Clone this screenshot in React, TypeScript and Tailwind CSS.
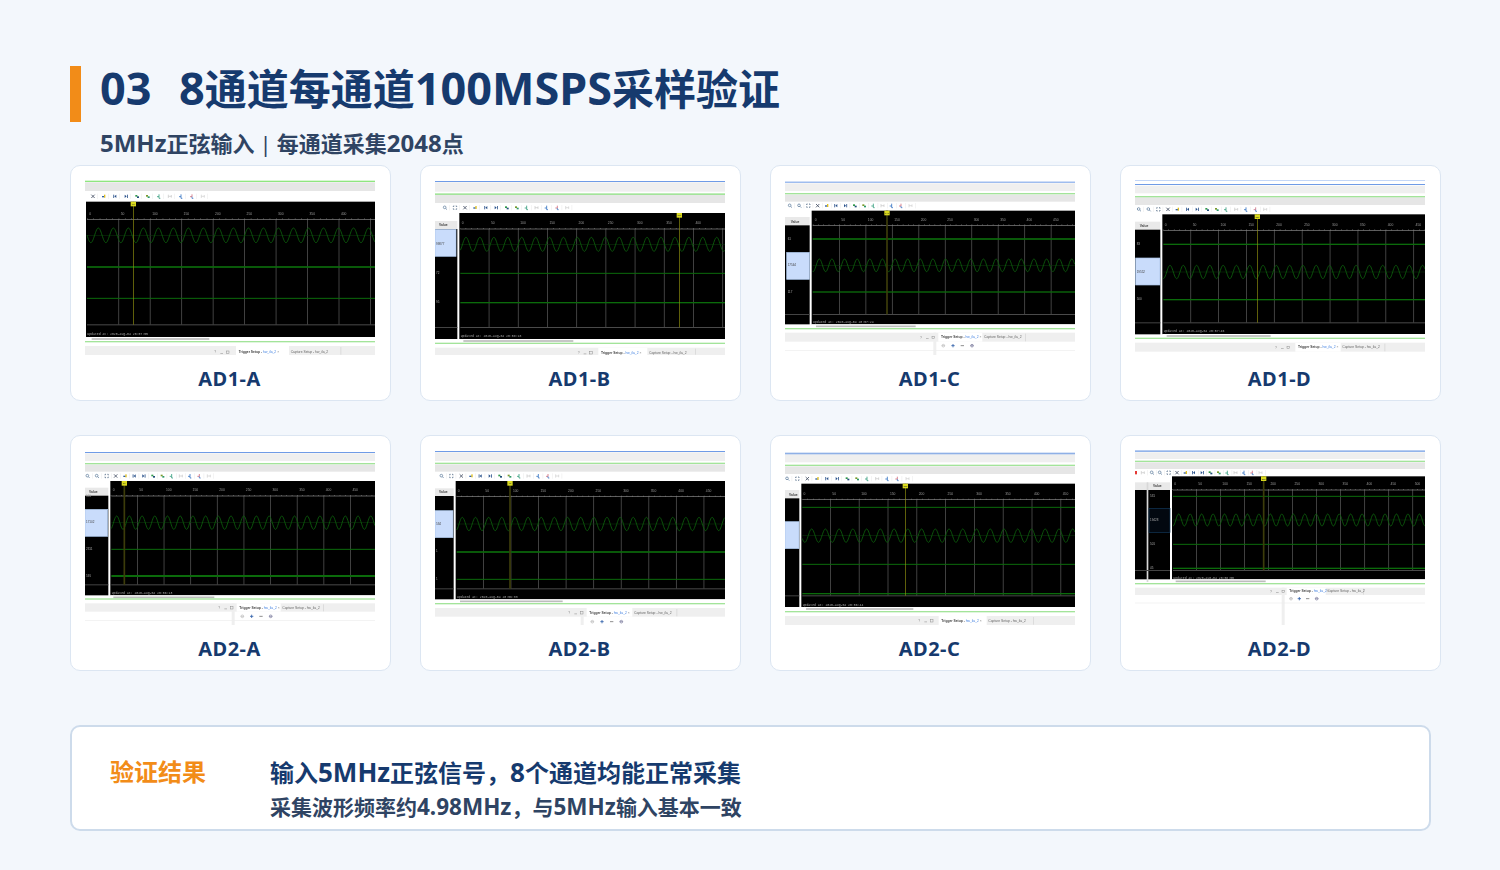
type Shot = {
  name: string;
  tops: [number, string, number?][];
  bands: [number, number][];
  toolbarY: number;
  icons: number[];
  redIcon?: boolean;
  plotX: number;
  plotTop: number;
  plotBottom: number;
  header?: [number, number];
  selected?: [number, number, number];
  darkSelected?: boolean;
  doublePanel?: boolean;
  values?: [number, string][];
  gridStart: number;
  gridStep: number;
  rulerY: number;
  floorY: number;
  marker: number;
  markerDim?: boolean;
  markerLabel: string;
  waveY: number;
  waveAmp: number;
  wavePeak: number;
  flats: [number, number][];
  updatedY: number;
  stamp: string;
  scroll: [number, number, number];
  greenY: number;
  band2: [number, number];
  tab: [number, number];
  tabY: number;
  helpX: number;
  lower?: [number, number[]];
  lowerLine?: number;
  divider?: number;
};

const BLUE = "#6f9be6";
const GREEN = "#a3e49a";
const UI_FONT = "Liberation Sans, sans-serif";

const shots: Shot[] = [
  {
    name: "AD1-A",
    tops: [[48, "#8fe67f", 4]],
    bands: [[52, 78]],
    toolbarY: 94,
    icons: [69, 101, 135, 168, 201, 233, 267, 300, 333, 366, 399],
    plotX: 48,
    plotTop: 110,
    plotBottom: 516,
    gridStart: 146,
    gridStep: 94.4,
    rulerY: 163,
    floorY: 479,
    marker: 190,
    markerLabel: "73",
    waveY: 211,
    waveAmp: 22,
    wavePeak: 85,
    flats: [[306, 5], [400, 3]],
    updatedY: 508,
    stamp: "2020-aug-04 20:57:55",
    scroll: [522, 65, 418],
    greenY: 530,
    band2: [543, 570],
    tab: [498, 655],
    tabY: 561,
    helpX: 433,
  },
  {
    name: "AD1-B",
    tops: [[49, BLUE, 3], [86, GREEN, 5]],
    bands: [[52, 80], [90, 114]],
    toolbarY: 128,
    icons: [75, 105, 135, 165, 198, 228, 260, 290, 320, 350, 380, 412, 442],
    plotX: 118,
    plotTop: 144,
    plotBottom: 522,
    header: [168, 192],
    selected: [45, 108, 193],
    values: [[237, "99877"], [325, "72"], [412, "95"]],
    gridStart: 207,
    gridStep: 87.6,
    rulerY: 192,
    floorY: 487,
    marker: 778,
    markerLabel: "376",
    waveY: 238,
    waveAmp: 21,
    wavePeak: 138,
    flats: [[325, 3], [413, 4]],
    updatedY: 514,
    stamp: "2020-aug-04 20:58:18",
    scroll: [528, 130, 460],
    greenY: 535,
    band2: [548, 570],
    tab: [535, 680],
    tabY: 563,
    helpX: 473,
  },
  {
    name: "AD1-C",
    tops: [[51, BLUE, 3], [85, GREEN, 4]],
    bands: [[55, 78], [89, 110]],
    toolbarY: 122,
    icons: [60, 88, 115, 143, 170, 198, 226, 254, 282, 310, 338, 365, 393, 422],
    plotX: 125,
    plotTop: 137,
    plotBottom: 478,
    header: [156, 181],
    selected: [50, 118, 262],
    values: [[221, "61"], [301, "17544"], [380, "117"]],
    gridStart: 208,
    gridStep: 79.4,
    rulerY: 181,
    floorY: 448,
    marker: 351,
    markerDim: true,
    markerLabel: "141",
    waveY: 301,
    waveAmp: 19,
    wavePeak: 148,
    flats: [[222, 5], [381, 4]],
    updatedY: 472,
    stamp: "2020-aug-04 20:57:24",
    scroll: [484, 138, 437],
    greenY: 491,
    band2: [503, 530],
    tab: [505, 635],
    tabY: 517,
    helpX: 450,
    lower: [542, [520, 549, 577, 606]],
    lowerLine: 556,
    divider: 496,
  },
  {
    name: "AD1-D",
    tops: [[46, "#c3d6f7", 3], [58, BLUE, 3], [94, GREEN, 4]],
    bands: [[62, 85], [97, 120]],
    toolbarY: 133,
    icons: [57, 86, 115, 144, 172, 203, 231, 261, 290, 318, 349, 378, 407, 436],
    plotX: 127,
    plotTop: 148,
    plotBottom: 508,
    header: [170, 194],
    selected: [47, 120, 279],
    values: [[236, "83"], [320, "19552"], [403, "500"]],
    gridStart: 212,
    gridStep: 83.6,
    rulerY: 196,
    floorY: 473,
    marker: 412,
    markerLabel: "286",
    waveY: 321,
    waveAmp: 20,
    wavePeak: 150,
    flats: [[238, 4], [404, 4]],
    updatedY: 499,
    stamp: "2020-aug-04 20:57:46",
    scroll: [513, 140, 452],
    greenY: 520,
    band2: [533, 560],
    tab: [526, 660],
    tabY: 547,
    helpX: 465,
  },
  {
    name: "AD2-A",
    tops: [[52, BLUE, 3], [85, GREEN, 4]],
    bands: [[55, 78], [89, 110]],
    toolbarY: 123,
    icons: [53, 81, 110, 137, 165, 193, 221, 249, 277, 305, 333, 360, 388, 417],
    plotX: 121,
    plotTop: 138,
    plotBottom: 481,
    header: [158, 182],
    selected: [45, 113, 223],
    values: [[184, "581"], [262, "17102"], [342, "2311"], [422, "591"]],
    gridStart: 202,
    gridStep: 79.9,
    rulerY: 183,
    floorY: 449,
    marker: 163,
    markerDim: true,
    markerLabel: "26",
    waveY: 263,
    waveAmp: 20,
    wavePeak: 140,
    flats: [[343, 3], [423, 6]],
    updatedY: 474,
    stamp: "2020-aug-04 20:56:13",
    scroll: [487, 130, 433],
    greenY: 492,
    band2: [505, 530],
    tab: [500, 630],
    tabY: 518,
    helpX: 445,
    lower: [544, [517, 545, 573, 602]],
    lowerLine: 556,
    divider: 491,
  },
  {
    name: "AD2-B",
    tops: [[49, BLUE, 3], [84, GREEN, 4]],
    bands: [[52, 78], [88, 110]],
    toolbarY: 123,
    icons: [65, 94, 124, 153, 181, 210, 240, 268, 297, 326, 355, 384, 412],
    plotX: 107,
    plotTop: 138,
    plotBottom: 493,
    header: [160, 183],
    selected: [45, 99, 227],
    values: [[267, "534"], [349, "1"], [431, "1"]],
    gridStart: 190,
    gridStep: 82.7,
    rulerY: 185,
    floorY: 461,
    marker: 270,
    markerDim: true,
    markerLabel: "98",
    waveY: 267,
    waveAmp: 20,
    wavePeak: 127,
    flats: [[351, 5], [433, 3]],
    updatedY: 486,
    stamp: "2020-aug-04 20:56:33",
    scroll: [499, 120, 428],
    greenY: 506,
    band2: [519, 545],
    tab: [500, 635],
    tabY: 533,
    helpX: 445,
    lower: [560, [517, 546, 575, 604]],
    divider: 488,
  },
  {
    name: "AD2-C",
    tops: [[54, "#8fb0e6", 5], [90, GREEN, 4]],
    bands: [[58, 82], [94, 117]],
    toolbarY: 131,
    icons: [52, 82, 112, 141, 171, 201, 232, 261, 291, 322, 352, 382, 413],
    plotX: 94,
    plotTop: 146,
    plotBottom: 516,
    header: [165, 190],
    selected: [45, 87, 260],
    gridStart: 181,
    gridStep: 86.4,
    rulerY: 194,
    floorY: 482,
    marker: 406,
    markerLabel: "283",
    waveY: 302,
    waveAmp: 20,
    wavePeak: 125,
    flats: [[217, 3], [388, 3], [476, 4]],
    updatedY: 509,
    stamp: "2020-aug-04 20:56:44",
    scroll: [522, 108, 430],
    greenY: 530,
    band2: [543, 570],
    tab: [506, 648],
    tabY: 557,
    helpX: 445,
  },
  {
    name: "AD2-D",
    tops: [[47, "#93b4ea", 5], [78, GREEN, 4]],
    bands: [[52, 72], [82, 102]],
    toolbarY: 113,
    redIcon: true,
    icons: [69, 96, 120, 146, 171, 196, 221, 246, 271, 296, 322, 347, 372, 397, 422],
    plotX: 156,
    plotTop: 124,
    plotBottom: 433,
    header: [142, 165],
    selected: [87, 150, 220],
    darkSelected: true,
    doublePanel: true,
    values: [[183, "531"], [255, "19428"], [327, "501"], [399, "45"]],
    gridStart: 229,
    gridStep: 72.1,
    rulerY: 165,
    floorY: 406,
    marker: 431,
    markerDim: true,
    markerLabel: "285",
    waveY: 255,
    waveAmp: 18,
    wavePeak: 176,
    flats: [[184, 3], [328, 3], [400, 4]],
    updatedY: 428,
    stamp: "2020-aug-04 20:58:50",
    scroll: [439, 167, 437],
    greenY: 446,
    band2: [458, 480],
    tab: [500, 615],
    tabY: 469,
    helpX: 450,
    lower: [491, [513, 538, 563, 590]],
    lowerLine: 503,
    divider: 491,
  },
];

// toolbar order, aligned from the right end of each toolbar
const iconKinds = [
  "ghost",
  "zoom",
  "zoom",
  "fit",
  "cross",
  "mark",
  "first",
  "last",
  "cycle",
  "cycle2",
  "step",
  "ghost",
  "step2",
  "step3",
  "end",
];

function wavePath(s: Shot) {
  const period = s.gridStep * 0.477;
  let d = "";
  for (let x = s.plotX + 3; x <= 915; x += 1.5) {
    const y = s.waveY - s.waveAmp * Math.cos(((x - s.wavePeak) / period) * Math.PI * 2);
    d += (d ? "L" : "M") + x + " " + y.toFixed(1);
  }
  return d;
}

function ToolIcon({ x, y, kind }: { x: number; y: number; kind: string }) {
  let glyph = null;
  if (kind === "zoom") {
    glyph = (
      <g fill="none" stroke="#5f7d9c" strokeWidth="2.2">
        <circle cx={x - 1} cy={y - 1} r="4" />
        <path d={`M${x + 2} ${y + 2}L${x + 6} ${y + 6}`} />
      </g>
    );
  } else if (kind === "fit") {
    glyph = (
      <path
        d={`M${x - 5} ${y - 2}V${y - 5}H${x - 2}M${x + 2} ${y - 5}H${x + 5}V${y - 2}M${x + 5} ${y + 2}V${y + 5}H${x + 2}M${x - 2} ${y + 5}H${x - 5}V${y + 2}`}
        fill="none"
        stroke="#3f5a78"
        strokeWidth="2"
      />
    );
  } else if (kind === "cross") {
    glyph = (
      <path
        d={`M${x - 5} ${y - 5}L${x + 5} ${y + 5}M${x + 5} ${y - 5}L${x - 5} ${y + 5}`}
        stroke="#4a5568"
        strokeWidth="2.6"
      />
    );
  } else if (kind === "mark") {
    glyph = (
      <g>
        <rect x={x - 5} y={y - 1} width="7" height="4" fill="#2f5fa8" />
        <rect x={x + 1} y={y - 5} width="4" height="9" fill="#e0c020" />
      </g>
    );
  } else if (kind === "first" || kind === "last") {
    const flip = kind === "first" ? -1 : 1;
    glyph = (
      <g fill="#28508a">
        <rect x={x + flip * 4 - 1} y={y - 5} width="2.4" height="10" />
        <path d={`M${x - flip * 4} ${y - 5}L${x + flip * 2} ${y}L${x - flip * 4} ${y + 5}Z`} />
      </g>
    );
  } else if (kind === "cycle" || kind === "cycle2") {
    glyph = (
      <g>
        <rect x={x - 5} y={y - 4} width="6" height="5" fill={kind === "cycle" ? "#2f9a4a" : "#7a9a2a"} />
        <rect x={x} y={y} width="6" height="5" fill={kind === "cycle" ? "#22507a" : "#2f9a6a"} />
      </g>
    );
  } else if (kind === "step" || kind === "step2" || kind === "step3") {
    const c = kind === "step" ? "#2f9a7a" : kind === "step2" ? "#2f6fc0" : "#d06a7a";
    glyph = (
      <g fill="none" stroke={c} strokeWidth="2.4">
        <path d={`M${x - 6} ${y + 1}H${x}V${y - 6}`} />
        <path d={`M${x} ${y + 1}V${y + 6}H${x + 4}`} stroke={kind === "step3" ? "#3a72c0" : c} />
      </g>
    );
  } else {
    const c = kind === "end" ? "#cfcfcf" : "#c6c6c6";
    glyph = (
      <path
        d={`M${x - 5} ${y - 5}V${y + 5}M${x - 5} ${y}H${x + 4}M${x + 4} ${y - 4}V${y + 4}`}
        fill="none"
        stroke={c}
        strokeWidth="2"
      />
    );
  }
  return (
    <g>
      {glyph}
      <rect x={x + 13} y={y - 8} width="1.5" height="16" fill="#e8e8e8" />
    </g>
  );
}

function Capture({ s }: { s: Shot }) {
  const grid: number[] = [];
  for (let x = s.gridStart; x < 915; x += s.gridStep) grid.push(x);
  const ticks: number[] = [];
  for (let x = s.gridStart - s.gridStep; x < 915; x += s.gridStep / 5) {
    if (x > s.plotX) ticks.push(x);
  }
  const [sbY, sbFrom, sbTo] = s.scroll;
  const tabW = s.tab[1] - s.tab[0];
  const tabH = s.band2[1] - s.band2[0];
  const panelTop = s.header ? s.header[1] : s.plotTop;

  return (
    <svg viewBox="45 45 870 525" className="block h-[175px] w-[290px] blur-[0.5px]">
      <rect x="45" y="45" width="870" height="525" fill="#ffffff" />
      {s.bands.map(([a, b], i) => (
        <rect
          key={a}
          x="45"
          y={a}
          width="870"
          height={b - a}
          fill={s.bands.length > 1 && i === 0 ? "#efefef" : "#e6e6e6"}
        />
      ))}
      {s.tops.map(([y, c, w]) => (
        <rect key={y} x="45" y={y - 1} width="870" height={w ?? 3} fill={c} />
      ))}

      {s.redIcon && <rect x="45" y={s.toolbarY - 5} width="6" height="10" fill="#e53935" />}
      {s.icons.map((x, i) => (
        <ToolIcon key={x} x={x} y={s.toolbarY} kind={iconKinds[iconKinds.length - s.icons.length + i]} />
      ))}

      {/* left value panel */}
      {s.header && (
        <>
          <rect x="45" y={s.plotTop} width={s.plotX - 45} height={s.plotBottom - s.plotTop} fill="#ffffff" />
          <rect x="45" y={s.header[0]} width={s.plotX - 51} height={s.header[1] - s.header[0]} fill="#e9e9e9" />
          <text
            x={s.selected![0] + 12}
            y={s.header[1] - 8}
            fontSize="10"
            fontWeight="700"
            fill="#444"
            fontFamily={UI_FONT}
          >
            Value
          </text>
          <rect x="45" y={panelTop} width={s.plotX - 51} height={s.plotBottom - panelTop} fill="#000000" />
          {s.doublePanel && (
            <rect x="80" y={s.header[0]} width="5" height={s.plotBottom - s.header[0] + 8} fill="#d8d8d8" />
          )}
          <rect x="45" y={s.floorY - 1} width={s.plotX - 51} height="3" fill="#444444" />
          {s.selected && (
            <rect
              x={s.selected[0]}
              y={s.selected[2]}
              width={s.selected[1] - s.selected[0]}
              height={s.doublePanel ? 72 : 81}
              fill={s.darkSelected ? "#020810" : "#c9dcfb"}
              stroke={s.darkSelected ? "#123a5c" : "#a9c3e6"}
              strokeWidth="2"
            />
          )}
          {s.values?.map(([y, v]) => (
            <text
              key={y}
              x={s.selected![0] + 3}
              y={y + 3}
              fontSize="9"
              fill={y > s.selected![2] && y < s.selected![2] + 81 && !s.darkSelected ? "#444" : "#aaa"}
              fontFamily={UI_FONT}
            >
              {v}
            </text>
          ))}
        </>
      )}

      {/* plot */}
      <rect x={s.plotX} y={s.plotTop} width={915 - s.plotX} height={s.plotBottom - s.plotTop} fill="#000000" />
      {grid.map((x) => (
        <rect key={x} x={x - 1} y={s.rulerY} width="2.4" height={s.floorY - s.rulerY} fill="#505050" />
      ))}
      <rect x={s.plotX + 3} y={s.rulerY - 1} width={912 - s.plotX} height="2" fill="#8c8c8c" />
      {ticks.map((x) => (
        <rect key={x} x={x} y={s.rulerY - 3} width="1.5" height="3" fill="#8c8c8c" />
      ))}
      {[s.gridStart - s.gridStep, ...grid].map((x, i) =>
        x + 28 < 915 ? (
          <text key={x} x={x + 6} y={s.rulerY - 14} fontSize="10" fill="#9a9a9a" fontFamily={UI_FONT}>
            {i * 50}
          </text>
        ) : null,
      )}
      <rect x={s.plotX + 3} y={s.floorY - 1} width={912 - s.plotX} height="3" fill="#4a4a4a" />
      <rect x={s.plotX + 3} y={s.waveY - 0.75} width={912 - s.plotX} height="1.5" fill="#0a3a0a" />
      {s.flats.map(([y, w]) => (
        <rect key={y} x={s.plotX + 3} y={y - w / 2} width={912 - s.plotX} height={w} fill="#0b6b0b" />
      ))}
      <path d={wavePath(s)} fill="none" stroke="#0d5f0d" strokeWidth="2.6" />
      <rect
        x={s.marker - (s.markerDim ? 2.5 : 1)}
        y={s.plotTop}
        width={s.markerDim ? 5 : 2}
        height={s.floorY - s.plotTop}
        fill={s.markerDim ? "#3c3c0a" : "#8f8f10"}
      />
      <rect x={s.marker - 8} y={s.plotTop} width="16" height="14" fill="#d9d91e" />
      <text x={s.marker} y={s.plotTop + 10} fontSize="7" textAnchor="middle" fill="#333" fontFamily={UI_FONT}>
        {s.markerLabel}
      </text>
      <text x={s.plotX + 4} y={s.updatedY + 3} fontSize="9.5" fill="#a8a8a8" fontFamily="Liberation Mono, monospace">
        Updated at: {s.stamp}
      </text>

      {/* scrollbar + status line */}
      <rect x={s.plotX} y={sbY - 6} width={915 - s.plotX} height="11" fill="#ffffff" />
      <rect x={sbFrom} y={sbY - 2.5} width={sbTo - sbFrom} height="5" fill="#bdbdbd" />
      <rect x="45" y={s.greenY - 2} width="870" height="4" fill={GREEN} />

      {/* bottom tabs */}
      <rect x="45" y={s.band2[0]} width="870" height={tabH} fill="#efefef" />
      {s.divider && <rect x={s.divider - 6} y={s.band2[0]} width="9" height={570 - s.band2[0]} fill="#efefef" />}
      <rect x={s.tab[0]} y={s.band2[0]} width={tabW + 2} height={tabH} fill="#ffffff" />
      <rect x={s.tab[1] + tabW} y={s.band2[0] + 3} width="1.5" height={tabH - 4} fill="#c8c8c8" />
      <text x={s.helpX} y={s.tabY + 4} fontSize="10" fill="#888" fontFamily={UI_FONT}>
        ?
      </text>
      <rect x={s.helpX + 18} y={s.tabY + 3} width="8" height="1.5" fill="#888" />
      <rect x={s.helpX + 36} y={s.tabY - 3} width="8" height="7" fill="none" stroke="#888" strokeWidth="1.4" />
      <text x={s.tab[0] + 8} y={s.tabY + 3} fontSize="10" fill="#444" fontFamily={UI_FONT}>
        <tspan fontWeight="700">Trigger Setup</tspan>
        <tspan> - </tspan>
        <tspan fill="#3f7fe0">hw_ila_2</tspan>
        <tspan fill="#888"> ×</tspan>
      </text>
      <text x={s.tab[1] + 7} y={s.tabY + 3} fontSize="10" fill="#666" fontFamily={UI_FONT}>
        Capture Setup - hw_ila_2
      </text>
      {s.lowerLine && <rect x="45" y={s.lowerLine} width="870" height="2" fill="#eeeeee" />}
      {s.lower &&
        s.lower[1].map((x, i) => (
          <g key={x} stroke={["#c4c4c4", "#2f5fa8", "#777777", "#8a8aa8"][i]} strokeWidth="2.5" fill="none">
            <path d={`M${x - 5} ${s.lower![0]}H${x + 5}`} />
            {i === 1 && <path d={`M${x} ${s.lower![0] - 5}V${s.lower![0] + 5}`} />}
            {i !== 1 && i !== 2 && <circle cx={x} cy={s.lower![0]} r="4" />}
          </g>
        ))}
    </svg>
  );
}

function ShotCard({ s }: { s: Shot }) {
  return (
    <div className="h-[236px] rounded-[10px] border border-[#dce6f2] bg-white pl-[14px] pr-[16px] pt-[14px]">
      <Capture s={s} />
      <div className="mt-[10px] text-center text-[20px] leading-[28px] font-bold tracking-[0.5px] text-[#163a6e]">
        {s.name}
      </div>
    </div>
  );
}

export default function App() {
  return (
    <div className="min-h-[870px] bg-[#f3f7fc] pl-[70px] pt-[66px] font-['Noto_Sans','Noto_Sans_CJK_SC',sans-serif]">
      {/* Title */}
      <div className="flex h-[56px] items-start">
        <div className="h-[56px] w-[11px] bg-[#f28c18]" />
        <h1 className="ml-[19px] -mt-[2px] flex h-[48px] items-baseline text-[42px] leading-[48px] font-bold text-[#163a6e]">
          <span className="w-[79px] text-[45px]">03</span>
          <span>
            <span className="text-[45px]">8</span>通道每通道<span className="text-[45px]">100MSPS</span>采样验证
          </span>
        </h1>
      </div>
      <p className="ml-[30px] mt-[5px] h-[32px] text-[22px] leading-[32px] font-bold text-[#2f4463]">
        <span className="text-[24px]">5MHz</span>正弦输入<span className="mx-[5px] font-normal">|</span>每通道采集
        <span className="text-[24px]">2048</span>点
      </p>

      {/* Captures */}
      <div className="mt-[6px] grid w-[1371px] grid-cols-4 gap-x-[29px] gap-y-[34px]">
        {shots.map((s) => (
          <ShotCard key={s.name} s={s} />
        ))}
      </div>

      {/* Result */}
      <div className="mt-[54px] flex h-[106px] w-[1361px] rounded-[10px] border-2 border-[#cddbeb] bg-white pl-[38px] pt-[27px]">
        <div className="w-[160px] text-[24px] leading-[36px] font-bold text-[#f28c18]">验证结果</div>
        <div>
          <div className="h-[37px] text-[24px] leading-[36px] font-bold text-[#163a6e]">
            输入<span className="text-[26px]">5MHz</span>正弦信号，<span className="text-[26px]">8</span>个通道均能正常采集
          </div>
          <div className="h-[32px] text-[21px] leading-[32px] font-bold text-[#2f4463]">
            采集波形频率约<span className="text-[22.5px]">4.98MHz</span>，与<span className="text-[22.5px]">5MHz</span>输入基本一致
          </div>
        </div>
      </div>
    </div>
  );
}
